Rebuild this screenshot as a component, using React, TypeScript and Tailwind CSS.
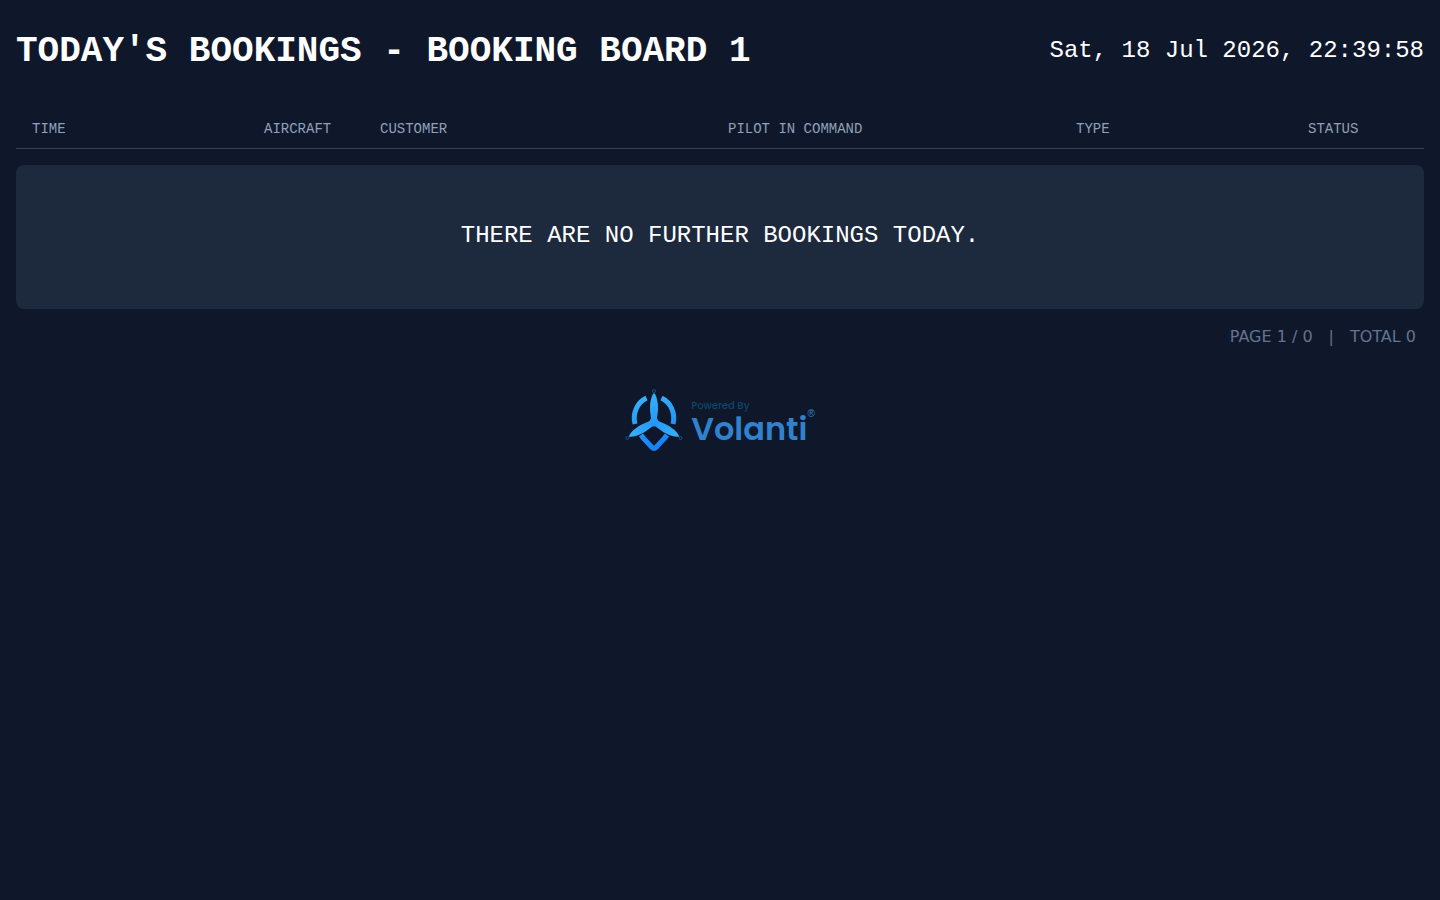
const columns = [
  { label: "Time", span: "col-span-2" },
  { label: "Aircraft", span: "col-span-1" },
  { label: "Customer", span: "col-span-3" },
  { label: "Pilot in command", span: "col-span-3" },
  { label: "Type", span: "col-span-2" },
  { label: "Status", span: "col-span-1" },
];

function VolantiLogo() {
  const blade = "M29 4C32 7 33.6 15 32.8 23L31.5 34H26.5L25.2 23C24.4 15 26 7 29 4Z";
  return (
    <div className="flex items-start gap-2">
      <svg className="h-16 w-[58px]" viewBox="0 0 58 64" fill="none" aria-hidden="true">
        <defs>
          <linearGradient id="frame" x1="20" y1="4" x2="38" y2="62" gradientUnits="userSpaceOnUse">
            <stop offset="0" stopColor="#38b4fa" />
            <stop offset="1" stopColor="#157df5" />
          </linearGradient>
        </defs>
        <g stroke="url(#frame)" strokeWidth="5">
          <path d="M21.5 9A20.5 22 0 0 0 10 35" />
          <path d="M36.5 9A20.5 22 0 0 1 48 35" />
          <path d="M16 46Q18 49 22 53L27 58.500Q29 60.500 31 58.500L36 53Q40 49 42 46" />
        </g>
        <g fill="url(#frame)">
          <path d={blade} />
          <path d={blade} transform="rotate(120 29 33)" />
          <path d={blade} transform="rotate(240 29 33)" />
          <circle cx="29" cy="33" r="4.5" />
        </g>
        <g stroke="#17508c" strokeWidth="1">
          <circle cx="29" cy="2" r="1.500" />
          <circle cx="2.500" cy="49" r="1.500" />
          <circle cx="55.500" cy="49" r="1.500" />
        </g>
      </svg>
      <div className="flex flex-col pt-2 font-['Poppins','Open_Sans',sans-serif]">
        <span className="text-[10px] leading-[18px] font-medium text-[#104668]">Powered By</span>
        <span className="flex items-start text-[32px] leading-7 font-semibold text-[#3182ce]">
          Volanti
          <sup className="-top-1.5 font-['Liberation_Sans',sans-serif] text-[10px] leading-none font-normal">®</sup>
        </span>
      </div>
    </div>
  );
}

export default function App() {
  return (
    <main className="min-h-screen bg-[#0f172a] px-4 font-['Liberation_Mono',monospace] text-white">
      <header className="flex items-center justify-between py-8">
        <h1 className="text-4xl font-bold uppercase">Today's Bookings - Booking Board 1</h1>
        <time className="pb-0.5 text-2xl leading-[30px]" dateTime="2026-07-18T22:39:58">
          Sat, 18 Jul 2026, 22:39:58
        </time>
      </header>
      <table className="block">
        <thead className="block border-b border-gray-700">
          <tr className="grid grid-cols-12 gap-4 px-4 pt-[15px] pb-[9px] text-sm leading-5 text-slate-400 uppercase">
            {columns.map((column) => (
              <th key={column.label} scope="col" className={`${column.span} text-left font-normal whitespace-nowrap`}>
                {column.label}
              </th>
            ))}
          </tr>
        </thead>
        <tbody className="block pt-4">
          <tr className="block rounded-lg bg-slate-800">
            <td className="block px-4 pt-14 pb-[58px] text-center text-2xl leading-[30px] uppercase" colSpan={6}>
              There are no further bookings today.
            </td>
          </tr>
        </tbody>
      </table>
      <div className="flex justify-end gap-4 px-2 pt-4 font-['DejaVu_Sans',sans-serif] text-base text-slate-500 uppercase">
        <span>Page 1 / 0</span>
        <span>|</span>
        <span>Total 0</span>
      </div>
      <footer className="flex justify-center pt-10">
        <VolantiLogo />
      </footer>
    </main>
  );
}
